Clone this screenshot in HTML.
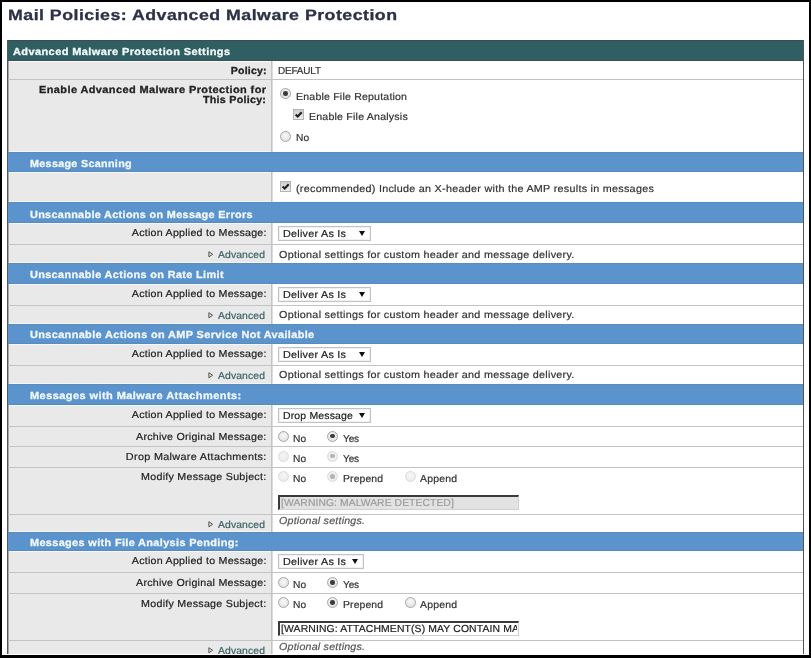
<!DOCTYPE html>
<html><head><meta charset="utf-8"><style>
html,body{margin:0;padding:0;}
body{width:811px;height:658px;position:relative;overflow:hidden;background:#fff;font-family:"Liberation Sans",sans-serif;text-rendering:geometricPrecision;}
#clip{position:absolute;left:0;top:0;width:811px;height:658px;overflow:hidden;filter:blur(0.35px);}
</style></head><body><div id="clip">
<div style="position:absolute;left:7px;top:40px;width:797px;height:21px;background:#2f5e63"></div>
<div style="position:absolute;left:7px;top:40px;width:797px;height:1px;background:#3f4b4e"></div>
<div style="position:absolute;left:7px;top:60px;width:797px;height:1px;background:#3f5053"></div>
<div style="position:absolute;left:8px;top:61px;width:263px;height:18px;background:#e9e9e9"></div>
<div style="position:absolute;left:272px;top:61px;width:531px;height:18px;background:#fff"></div>
<div style="position:absolute;left:271px;top:61px;width:1px;height:18px;background:#c4c4c4"></div>
<div style="position:absolute;left:272px;top:61px;width:1px;height:18px;background:#dcdcdc"></div>
<div style="position:absolute;left:8px;top:61px;width:1px;height:18px;background:#a8a8a8"></div>
<div style="position:absolute;left:9px;top:61px;width:262px;height:1px;background:#f7f7f7"></div>
<div style="position:absolute;left:8px;top:79px;width:263px;height:73px;background:#e9e9e9"></div>
<div style="position:absolute;left:272px;top:79px;width:531px;height:73px;background:#fff"></div>
<div style="position:absolute;left:271px;top:79px;width:1px;height:73px;background:#c4c4c4"></div>
<div style="position:absolute;left:272px;top:79px;width:1px;height:73px;background:#dcdcdc"></div>
<div style="position:absolute;left:8px;top:79px;width:1px;height:73px;background:#a8a8a8"></div>
<div style="position:absolute;left:9px;top:151px;width:262px;height:1px;background:#f5f5f5"></div>
<div style="position:absolute;left:8px;top:79px;width:795px;height:1px;background:#c3c3c3"></div>
<div style="position:absolute;left:8px;top:152px;width:795px;height:20px;background:#5b93cc"></div>
<div style="position:absolute;left:8px;top:152px;width:795px;height:1px;background:#5d8cba"></div>
<div style="position:absolute;left:8px;top:171px;width:795px;height:1px;background:#5a8bbd"></div>
<div style="position:absolute;left:8px;top:172px;width:263px;height:30px;background:#e9e9e9"></div>
<div style="position:absolute;left:272px;top:172px;width:531px;height:30px;background:#fff"></div>
<div style="position:absolute;left:271px;top:172px;width:1px;height:30px;background:#c4c4c4"></div>
<div style="position:absolute;left:272px;top:172px;width:1px;height:30px;background:#dcdcdc"></div>
<div style="position:absolute;left:8px;top:172px;width:1px;height:30px;background:#a8a8a8"></div>
<div style="position:absolute;left:9px;top:172px;width:262px;height:1px;background:#f7f7f7"></div>
<div style="position:absolute;left:9px;top:201px;width:262px;height:1px;background:#f5f5f5"></div>
<div style="position:absolute;left:8px;top:202px;width:795px;height:21px;background:#5b93cc"></div>
<div style="position:absolute;left:8px;top:202px;width:795px;height:1px;background:#5d8cba"></div>
<div style="position:absolute;left:8px;top:222px;width:795px;height:1px;background:#5a8bbd"></div>
<div style="position:absolute;left:8px;top:223px;width:263px;height:21px;background:#e9e9e9"></div>
<div style="position:absolute;left:272px;top:223px;width:531px;height:21px;background:#fff"></div>
<div style="position:absolute;left:271px;top:223px;width:1px;height:21px;background:#c4c4c4"></div>
<div style="position:absolute;left:272px;top:223px;width:1px;height:21px;background:#dcdcdc"></div>
<div style="position:absolute;left:8px;top:223px;width:1px;height:21px;background:#a8a8a8"></div>
<div style="position:absolute;left:9px;top:223px;width:262px;height:1px;background:#f7f7f7"></div>
<div style="position:absolute;left:8px;top:244px;width:263px;height:19px;background:#e9e9e9"></div>
<div style="position:absolute;left:272px;top:244px;width:531px;height:19px;background:#fff"></div>
<div style="position:absolute;left:271px;top:244px;width:1px;height:19px;background:#c4c4c4"></div>
<div style="position:absolute;left:272px;top:244px;width:1px;height:19px;background:#dcdcdc"></div>
<div style="position:absolute;left:8px;top:244px;width:1px;height:19px;background:#a8a8a8"></div>
<div style="position:absolute;left:9px;top:262px;width:262px;height:1px;background:#f5f5f5"></div>
<div style="position:absolute;left:8px;top:244px;width:795px;height:1px;background:#c3c3c3"></div>
<div style="position:absolute;left:8px;top:263px;width:795px;height:21px;background:#5b93cc"></div>
<div style="position:absolute;left:8px;top:263px;width:795px;height:1px;background:#5d8cba"></div>
<div style="position:absolute;left:8px;top:283px;width:795px;height:1px;background:#5a8bbd"></div>
<div style="position:absolute;left:8px;top:284px;width:263px;height:21px;background:#e9e9e9"></div>
<div style="position:absolute;left:272px;top:284px;width:531px;height:21px;background:#fff"></div>
<div style="position:absolute;left:271px;top:284px;width:1px;height:21px;background:#c4c4c4"></div>
<div style="position:absolute;left:272px;top:284px;width:1px;height:21px;background:#dcdcdc"></div>
<div style="position:absolute;left:8px;top:284px;width:1px;height:21px;background:#a8a8a8"></div>
<div style="position:absolute;left:9px;top:284px;width:262px;height:1px;background:#f7f7f7"></div>
<div style="position:absolute;left:8px;top:305px;width:263px;height:19px;background:#e9e9e9"></div>
<div style="position:absolute;left:272px;top:305px;width:531px;height:19px;background:#fff"></div>
<div style="position:absolute;left:271px;top:305px;width:1px;height:19px;background:#c4c4c4"></div>
<div style="position:absolute;left:272px;top:305px;width:1px;height:19px;background:#dcdcdc"></div>
<div style="position:absolute;left:8px;top:305px;width:1px;height:19px;background:#a8a8a8"></div>
<div style="position:absolute;left:9px;top:323px;width:262px;height:1px;background:#f5f5f5"></div>
<div style="position:absolute;left:8px;top:305px;width:795px;height:1px;background:#c3c3c3"></div>
<div style="position:absolute;left:8px;top:324px;width:795px;height:20px;background:#5b93cc"></div>
<div style="position:absolute;left:8px;top:324px;width:795px;height:1px;background:#5d8cba"></div>
<div style="position:absolute;left:8px;top:343px;width:795px;height:1px;background:#5a8bbd"></div>
<div style="position:absolute;left:8px;top:344px;width:263px;height:21px;background:#e9e9e9"></div>
<div style="position:absolute;left:272px;top:344px;width:531px;height:21px;background:#fff"></div>
<div style="position:absolute;left:271px;top:344px;width:1px;height:21px;background:#c4c4c4"></div>
<div style="position:absolute;left:272px;top:344px;width:1px;height:21px;background:#dcdcdc"></div>
<div style="position:absolute;left:8px;top:344px;width:1px;height:21px;background:#a8a8a8"></div>
<div style="position:absolute;left:9px;top:344px;width:262px;height:1px;background:#f7f7f7"></div>
<div style="position:absolute;left:8px;top:365px;width:263px;height:19px;background:#e9e9e9"></div>
<div style="position:absolute;left:272px;top:365px;width:531px;height:19px;background:#fff"></div>
<div style="position:absolute;left:271px;top:365px;width:1px;height:19px;background:#c4c4c4"></div>
<div style="position:absolute;left:272px;top:365px;width:1px;height:19px;background:#dcdcdc"></div>
<div style="position:absolute;left:8px;top:365px;width:1px;height:19px;background:#a8a8a8"></div>
<div style="position:absolute;left:9px;top:383px;width:262px;height:1px;background:#f5f5f5"></div>
<div style="position:absolute;left:8px;top:365px;width:795px;height:1px;background:#c3c3c3"></div>
<div style="position:absolute;left:8px;top:384px;width:795px;height:21px;background:#5b93cc"></div>
<div style="position:absolute;left:8px;top:384px;width:795px;height:1px;background:#5d8cba"></div>
<div style="position:absolute;left:8px;top:404px;width:795px;height:1px;background:#5a8bbd"></div>
<div style="position:absolute;left:8px;top:405px;width:263px;height:21px;background:#e9e9e9"></div>
<div style="position:absolute;left:272px;top:405px;width:531px;height:21px;background:#fff"></div>
<div style="position:absolute;left:271px;top:405px;width:1px;height:21px;background:#c4c4c4"></div>
<div style="position:absolute;left:272px;top:405px;width:1px;height:21px;background:#dcdcdc"></div>
<div style="position:absolute;left:8px;top:405px;width:1px;height:21px;background:#a8a8a8"></div>
<div style="position:absolute;left:9px;top:405px;width:262px;height:1px;background:#f7f7f7"></div>
<div style="position:absolute;left:8px;top:426px;width:263px;height:20px;background:#e9e9e9"></div>
<div style="position:absolute;left:272px;top:426px;width:531px;height:20px;background:#fff"></div>
<div style="position:absolute;left:271px;top:426px;width:1px;height:20px;background:#c4c4c4"></div>
<div style="position:absolute;left:272px;top:426px;width:1px;height:20px;background:#dcdcdc"></div>
<div style="position:absolute;left:8px;top:426px;width:1px;height:20px;background:#a8a8a8"></div>
<div style="position:absolute;left:8px;top:426px;width:795px;height:1px;background:#c3c3c3"></div>
<div style="position:absolute;left:8px;top:446px;width:263px;height:21px;background:#e9e9e9"></div>
<div style="position:absolute;left:272px;top:446px;width:531px;height:21px;background:#fff"></div>
<div style="position:absolute;left:271px;top:446px;width:1px;height:21px;background:#c4c4c4"></div>
<div style="position:absolute;left:272px;top:446px;width:1px;height:21px;background:#dcdcdc"></div>
<div style="position:absolute;left:8px;top:446px;width:1px;height:21px;background:#a8a8a8"></div>
<div style="position:absolute;left:8px;top:446px;width:795px;height:1px;background:#c3c3c3"></div>
<div style="position:absolute;left:8px;top:467px;width:263px;height:47px;background:#e9e9e9"></div>
<div style="position:absolute;left:272px;top:467px;width:531px;height:47px;background:#fff"></div>
<div style="position:absolute;left:271px;top:467px;width:1px;height:47px;background:#c4c4c4"></div>
<div style="position:absolute;left:272px;top:467px;width:1px;height:47px;background:#dcdcdc"></div>
<div style="position:absolute;left:8px;top:467px;width:1px;height:47px;background:#a8a8a8"></div>
<div style="position:absolute;left:8px;top:467px;width:795px;height:1px;background:#c3c3c3"></div>
<div style="position:absolute;left:8px;top:514px;width:263px;height:18px;background:#e9e9e9"></div>
<div style="position:absolute;left:272px;top:514px;width:531px;height:18px;background:#fff"></div>
<div style="position:absolute;left:271px;top:514px;width:1px;height:18px;background:#c4c4c4"></div>
<div style="position:absolute;left:272px;top:514px;width:1px;height:18px;background:#dcdcdc"></div>
<div style="position:absolute;left:8px;top:514px;width:1px;height:18px;background:#a8a8a8"></div>
<div style="position:absolute;left:9px;top:531px;width:262px;height:1px;background:#f5f5f5"></div>
<div style="position:absolute;left:8px;top:514px;width:795px;height:1px;background:#c3c3c3"></div>
<div style="position:absolute;left:8px;top:532px;width:795px;height:19px;background:#5b93cc"></div>
<div style="position:absolute;left:8px;top:532px;width:795px;height:1px;background:#5d8cba"></div>
<div style="position:absolute;left:8px;top:550px;width:795px;height:1px;background:#5a8bbd"></div>
<div style="position:absolute;left:8px;top:551px;width:263px;height:21px;background:#e9e9e9"></div>
<div style="position:absolute;left:272px;top:551px;width:531px;height:21px;background:#fff"></div>
<div style="position:absolute;left:271px;top:551px;width:1px;height:21px;background:#c4c4c4"></div>
<div style="position:absolute;left:272px;top:551px;width:1px;height:21px;background:#dcdcdc"></div>
<div style="position:absolute;left:8px;top:551px;width:1px;height:21px;background:#a8a8a8"></div>
<div style="position:absolute;left:9px;top:551px;width:262px;height:1px;background:#f7f7f7"></div>
<div style="position:absolute;left:8px;top:572px;width:263px;height:21px;background:#e9e9e9"></div>
<div style="position:absolute;left:272px;top:572px;width:531px;height:21px;background:#fff"></div>
<div style="position:absolute;left:271px;top:572px;width:1px;height:21px;background:#c4c4c4"></div>
<div style="position:absolute;left:272px;top:572px;width:1px;height:21px;background:#dcdcdc"></div>
<div style="position:absolute;left:8px;top:572px;width:1px;height:21px;background:#a8a8a8"></div>
<div style="position:absolute;left:8px;top:572px;width:795px;height:1px;background:#c3c3c3"></div>
<div style="position:absolute;left:8px;top:593px;width:263px;height:47px;background:#e9e9e9"></div>
<div style="position:absolute;left:272px;top:593px;width:531px;height:47px;background:#fff"></div>
<div style="position:absolute;left:271px;top:593px;width:1px;height:47px;background:#c4c4c4"></div>
<div style="position:absolute;left:272px;top:593px;width:1px;height:47px;background:#dcdcdc"></div>
<div style="position:absolute;left:8px;top:593px;width:1px;height:47px;background:#a8a8a8"></div>
<div style="position:absolute;left:8px;top:593px;width:795px;height:1px;background:#c3c3c3"></div>
<div style="position:absolute;left:8px;top:640px;width:263px;height:20px;background:#e9e9e9"></div>
<div style="position:absolute;left:272px;top:640px;width:531px;height:20px;background:#fff"></div>
<div style="position:absolute;left:271px;top:640px;width:1px;height:20px;background:#c4c4c4"></div>
<div style="position:absolute;left:272px;top:640px;width:1px;height:20px;background:#dcdcdc"></div>
<div style="position:absolute;left:8px;top:640px;width:1px;height:20px;background:#a8a8a8"></div>
<div style="position:absolute;left:8px;top:640px;width:795px;height:1px;background:#c3c3c3"></div>
<div style="position:absolute;left:7px;top:40px;width:1px;height:620px;background:#555"></div>
<div style="position:absolute;left:803px;top:40px;width:1px;height:620px;background:#555"></div>
<div style="position:absolute;left:280px;top:88px;width:9px;height:9px;border:1px solid #a6a6a6;border-radius:50%;background:radial-gradient(circle at 50% 40%,#f8f8f8 0,#e8e8e8 60%,#dadada 100%)"></div>
<div style="position:absolute;left:283.2px;top:91.2px;width:4.5px;height:4.5px;border-radius:50%;background:#3c3c3c"></div>
<div style="position:absolute;left:293px;top:109px;width:9px;height:9px;border:1px solid #b4b4b4;background:linear-gradient(#cfcfcf,#ececec)"></div>
<svg style="position:absolute;left:293px;top:109px" width="11" height="11" viewBox="0 0 11 11"><path d="M2.6 5.4 L4.7 7.4 L8.7 3.3" fill="none" stroke="#1e1e1e" stroke-width="2.1"/></svg>
<div style="position:absolute;left:280px;top:131px;width:9px;height:9px;border:1px solid #a6a6a6;border-radius:50%;background:radial-gradient(circle at 50% 40%,#f8f8f8 0,#e8e8e8 60%,#dadada 100%)"></div>
<div style="position:absolute;left:280px;top:181px;width:9px;height:9px;border:1px solid #b4b4b4;background:linear-gradient(#cfcfcf,#ececec)"></div>
<svg style="position:absolute;left:280px;top:181px" width="11" height="11" viewBox="0 0 11 11"><path d="M2.6 5.4 L4.7 7.4 L8.7 3.3" fill="none" stroke="#1e1e1e" stroke-width="2.1"/></svg>
<div style="position:absolute;left:278px;top:226px;width:91px;height:13px;border:1px solid #c2c2c2;background:#fff;box-shadow:inset 0 0 0 1px #f0f0f0"></div>
<svg style="position:absolute;left:359px;top:231px" width="6" height="5" viewBox="0 0 6 5"><path d="M0 0 H6 L3 5 Z" fill="#111"/></svg>
<svg style="position:absolute;left:208px;top:251.10000000000002px" width="6" height="7" viewBox="0 0 6 7"><path d="M0.9 0.7 L4.6 3.25 L0.9 5.8 Z" fill="none" stroke="#505050" stroke-width="1"/></svg>
<div style="position:absolute;left:278px;top:287px;width:91px;height:13px;border:1px solid #c2c2c2;background:#fff;box-shadow:inset 0 0 0 1px #f0f0f0"></div>
<svg style="position:absolute;left:359px;top:292px" width="6" height="5" viewBox="0 0 6 5"><path d="M0 0 H6 L3 5 Z" fill="#111"/></svg>
<svg style="position:absolute;left:208px;top:312.1px" width="6" height="7" viewBox="0 0 6 7"><path d="M0.9 0.7 L4.6 3.25 L0.9 5.8 Z" fill="none" stroke="#505050" stroke-width="1"/></svg>
<div style="position:absolute;left:278px;top:347px;width:91px;height:13px;border:1px solid #c2c2c2;background:#fff;box-shadow:inset 0 0 0 1px #f0f0f0"></div>
<svg style="position:absolute;left:359px;top:352px" width="6" height="5" viewBox="0 0 6 5"><path d="M0 0 H6 L3 5 Z" fill="#111"/></svg>
<svg style="position:absolute;left:208px;top:372.1px" width="6" height="7" viewBox="0 0 6 7"><path d="M0.9 0.7 L4.6 3.25 L0.9 5.8 Z" fill="none" stroke="#505050" stroke-width="1"/></svg>
<div style="position:absolute;left:278px;top:408px;width:91px;height:13px;border:1px solid #c2c2c2;background:#fff;box-shadow:inset 0 0 0 1px #f0f0f0"></div>
<svg style="position:absolute;left:359px;top:413px" width="6" height="5" viewBox="0 0 6 5"><path d="M0 0 H6 L3 5 Z" fill="#111"/></svg>
<div style="position:absolute;left:278px;top:430.5px;width:9px;height:9px;border:1px solid #a6a6a6;border-radius:50%;background:radial-gradient(circle at 50% 40%,#f8f8f8 0,#e8e8e8 60%,#dadada 100%)"></div>
<div style="position:absolute;left:327px;top:430.5px;width:9px;height:9px;border:1px solid #a6a6a6;border-radius:50%;background:radial-gradient(circle at 50% 40%,#f8f8f8 0,#e8e8e8 60%,#dadada 100%)"></div>
<div style="position:absolute;left:330.2px;top:433.7px;width:4.5px;height:4.5px;border-radius:50%;background:#3c3c3c"></div>
<div style="position:absolute;left:278px;top:450.5px;width:9px;height:9px;border:1px solid #dcdcdc;border-radius:50%;background:radial-gradient(circle at 50% 40%,#f6f6f6 0,#ececec 70%,#e4e4e4 100%)"></div>
<div style="position:absolute;left:327px;top:450.5px;width:9px;height:9px;border:1px solid #dcdcdc;border-radius:50%;background:radial-gradient(circle at 50% 40%,#f6f6f6 0,#ececec 70%,#e4e4e4 100%)"></div>
<div style="position:absolute;left:330.2px;top:453.7px;width:4.5px;height:4.5px;border-radius:50%;background:#b4b4b4"></div>
<div style="position:absolute;left:278px;top:471px;width:9px;height:9px;border:1px solid #dcdcdc;border-radius:50%;background:radial-gradient(circle at 50% 40%,#f6f6f6 0,#ececec 70%,#e4e4e4 100%)"></div>
<div style="position:absolute;left:327px;top:471px;width:9px;height:9px;border:1px solid #dcdcdc;border-radius:50%;background:radial-gradient(circle at 50% 40%,#f6f6f6 0,#ececec 70%,#e4e4e4 100%)"></div>
<div style="position:absolute;left:330.2px;top:474.2px;width:4.5px;height:4.5px;border-radius:50%;background:#b4b4b4"></div>
<div style="position:absolute;left:404.5px;top:471px;width:9px;height:9px;border:1px solid #dcdcdc;border-radius:50%;background:radial-gradient(circle at 50% 40%,#f6f6f6 0,#ececec 70%,#e4e4e4 100%)"></div>
<div style="position:absolute;left:278px;top:495px;width:239px;height:13px;border-top:2px solid #3a3a3a;border-left:2px solid #3a3a3a;border-right:1px solid #d0d0d0;border-bottom:1px solid #d0d0d0;background:#e2e2e2;box-sizing:content-box;width:238px;height:12px"></div>
<svg style="position:absolute;left:208px;top:521.1px" width="6" height="7" viewBox="0 0 6 7"><path d="M0.9 0.7 L4.6 3.25 L0.9 5.8 Z" fill="none" stroke="#505050" stroke-width="1"/></svg>
<div style="position:absolute;left:278px;top:554px;width:84px;height:13px;border:1px solid #c2c2c2;background:#fff;box-shadow:inset 0 0 0 1px #f0f0f0"></div>
<svg style="position:absolute;left:352px;top:559px" width="6" height="5" viewBox="0 0 6 5"><path d="M0 0 H6 L3 5 Z" fill="#111"/></svg>
<div style="position:absolute;left:278px;top:577px;width:9px;height:9px;border:1px solid #a6a6a6;border-radius:50%;background:radial-gradient(circle at 50% 40%,#f8f8f8 0,#e8e8e8 60%,#dadada 100%)"></div>
<div style="position:absolute;left:327px;top:577px;width:9px;height:9px;border:1px solid #a6a6a6;border-radius:50%;background:radial-gradient(circle at 50% 40%,#f8f8f8 0,#e8e8e8 60%,#dadada 100%)"></div>
<div style="position:absolute;left:330.2px;top:580.2px;width:4.5px;height:4.5px;border-radius:50%;background:#3c3c3c"></div>
<div style="position:absolute;left:278px;top:597px;width:9px;height:9px;border:1px solid #a6a6a6;border-radius:50%;background:radial-gradient(circle at 50% 40%,#f8f8f8 0,#e8e8e8 60%,#dadada 100%)"></div>
<div style="position:absolute;left:327px;top:597px;width:9px;height:9px;border:1px solid #a6a6a6;border-radius:50%;background:radial-gradient(circle at 50% 40%,#f8f8f8 0,#e8e8e8 60%,#dadada 100%)"></div>
<div style="position:absolute;left:330.2px;top:600.2px;width:4.5px;height:4.5px;border-radius:50%;background:#3c3c3c"></div>
<div style="position:absolute;left:404.5px;top:597px;width:9px;height:9px;border:1px solid #a6a6a6;border-radius:50%;background:radial-gradient(circle at 50% 40%,#f8f8f8 0,#e8e8e8 60%,#dadada 100%)"></div>
<div style="position:absolute;left:278px;top:621px;width:238px;height:12px;border-top:2px solid #3a3a3a;border-left:2px solid #3a3a3a;border-right:1px solid #d0d0d0;border-bottom:1px solid #d0d0d0;background:#fff;overflow:hidden"></div>
<svg style="position:absolute;left:208px;top:647.1px" width="6" height="7" viewBox="0 0 6 7"><path d="M0.9 0.7 L4.6 3.25 L0.9 5.8 Z" fill="none" stroke="#505050" stroke-width="1"/></svg>
<div id="t0" style="position:absolute;white-space:nowrap;font-size:15px;line-height:15px;color:#2b3146;font-weight:bold;-webkit-text-stroke:0.3px #2b3146;letter-spacing:0.396px;top:8.00px;transform:scaleX(1.1850);left:8px;transform-origin:0 0;">Mail Policies: Advanced Malware Protection</div>
<div id="t1" style="position:absolute;white-space:nowrap;font-size:10.2px;line-height:10.2px;color:#f4fbfb;font-weight:bold;-webkit-text-stroke:0.3px #f4fbfb;letter-spacing:0.385px;top:48.00px;transform:scaleX(1.0773);left:12.5px;transform-origin:0 0;">Advanced Malware Protection Settings</div>
<div id="t2" style="position:absolute;white-space:nowrap;font-size:10.2px;line-height:10.2px;color:#f2f8fc;font-weight:bold;-webkit-text-stroke:0.3px #f2f8fc;letter-spacing:0.313px;top:160.00px;transform:scaleX(1.0539);left:30.4px;transform-origin:0 0;">Message Scanning</div>
<div id="t3" style="position:absolute;white-space:nowrap;font-size:10.2px;line-height:10.2px;color:#f2f8fc;font-weight:bold;-webkit-text-stroke:0.3px #f2f8fc;letter-spacing:0.323px;top:211.00px;transform:scaleX(1.0625);left:30.4px;transform-origin:0 0;">Unscannable Actions on Message Errors</div>
<div id="t4" style="position:absolute;white-space:nowrap;font-size:10.2px;line-height:10.2px;color:#f2f8fc;font-weight:bold;-webkit-text-stroke:0.3px #f2f8fc;letter-spacing:0.336px;top:271.00px;transform:scaleX(1.0672);left:30.4px;transform-origin:0 0;">Unscannable Actions on Rate Limit</div>
<div id="t5" style="position:absolute;white-space:nowrap;font-size:10.2px;line-height:10.2px;color:#f2f8fc;font-weight:bold;-webkit-text-stroke:0.3px #f2f8fc;letter-spacing:0.349px;top:331.00px;transform:scaleX(1.0704);left:30.4px;transform-origin:0 0;">Unscannable Actions on AMP Service Not Available</div>
<div id="t6" style="position:absolute;white-space:nowrap;font-size:10.2px;line-height:10.2px;color:#f2f8fc;font-weight:bold;-webkit-text-stroke:0.3px #f2f8fc;letter-spacing:0.403px;top:392.00px;transform:scaleX(1.0787);left:30.4px;transform-origin:0 0;">Messages with Malware Attachments:</div>
<div id="t7" style="position:absolute;white-space:nowrap;font-size:10.2px;line-height:10.2px;color:#f2f8fc;font-weight:bold;-webkit-text-stroke:0.3px #f2f8fc;letter-spacing:0.337px;top:539.00px;transform:scaleX(1.0690);left:30.4px;transform-origin:0 0;">Messages with File Analysis Pending:</div>
<div id="t8" style="position:absolute;white-space:nowrap;font-size:10.2px;line-height:10.2px;color:#222;font-weight:bold;-webkit-text-stroke:0.3px #222;letter-spacing:0.185px;top:67.00px;transform:scaleX(1.0343);right:544.81px;transform-origin:100% 0;">Policy:</div>
<div id="t9" style="position:absolute;white-space:nowrap;font-size:10.2px;line-height:10.2px;color:#333;-webkit-text-stroke:0.2px #333;letter-spacing:-0.180px;top:67.00px;transform:scaleX(0.9766);left:278.4px;transform-origin:0 0;">DEFAULT</div>
<div id="t10" style="position:absolute;white-space:nowrap;font-size:10.2px;line-height:10.2px;color:#222;font-weight:bold;-webkit-text-stroke:0.3px #222;letter-spacing:0.374px;top:86.00px;transform:scaleX(1.0755);right:544.60px;transform-origin:100% 0;">Enable Advanced Malware Protection for</div>
<div id="t11" style="position:absolute;white-space:nowrap;font-size:10.2px;line-height:10.2px;color:#222;font-weight:bold;-webkit-text-stroke:0.3px #222;letter-spacing:0.251px;top:96.00px;transform:scaleX(1.0508);right:544.74px;transform-origin:100% 0;">This Policy:</div>
<div id="t12" style="position:absolute;white-space:nowrap;font-size:10.2px;line-height:10.2px;color:#333;-webkit-text-stroke:0.2px #333;letter-spacing:0.182px;top:93.00px;transform:scaleX(1.0384);left:295.5px;transform-origin:0 0;">Enable File Reputation</div>
<div id="t13" style="position:absolute;white-space:nowrap;font-size:10.2px;line-height:10.2px;color:#333;-webkit-text-stroke:0.2px #333;letter-spacing:0.190px;top:113.00px;transform:scaleX(1.0413);left:308.7px;transform-origin:0 0;">Enable File Analysis</div>
<div id="t14" style="position:absolute;white-space:nowrap;font-size:10.2px;line-height:10.2px;color:#333;-webkit-text-stroke:0.2px #333;letter-spacing:0.034px;top:134.00px;transform:scaleX(1.0026);left:295.5px;transform-origin:0 0;">No</div>
<div id="t15" style="position:absolute;white-space:nowrap;font-size:10.2px;line-height:10.2px;color:#333;-webkit-text-stroke:0.2px #333;letter-spacing:0.265px;top:185.00px;transform:scaleX(1.0565);left:295.8px;transform-origin:0 0;">(recommended) Include an X-header with the AMP results in messages</div>
<div id="t16" style="position:absolute;white-space:nowrap;font-size:10.2px;line-height:10.2px;color:#222;-webkit-text-stroke:0.2px #222;letter-spacing:0.225px;top:229.00px;transform:scaleX(1.0480);right:544.76px;transform-origin:100% 0;">Action Applied to Message:</div>
<div id="t17" style="position:absolute;white-space:nowrap;font-size:10.2px;line-height:10.2px;color:#222;-webkit-text-stroke:0.2px #222;letter-spacing:0.251px;top:230.00px;transform:scaleX(1.0563);left:283px;transform-origin:0 0;">Deliver As Is</div>
<div id="t18" style="position:absolute;white-space:nowrap;font-size:10.2px;line-height:10.2px;color:#3b6366;-webkit-text-stroke:0.2px #3b6366;letter-spacing:0.111px;top:251.00px;transform:scaleX(1.0175);left:218.2px;transform-origin:0 0;">Advanced</div>
<div id="t19" style="position:absolute;white-space:nowrap;font-size:10.2px;line-height:10.2px;color:#333;-webkit-text-stroke:0.2px #333;letter-spacing:0.257px;top:251.00px;transform:scaleX(1.0575);left:278.7px;transform-origin:0 0;">Optional settings for custom header and message delivery.</div>
<div id="t20" style="position:absolute;white-space:nowrap;font-size:10.2px;line-height:10.2px;color:#222;-webkit-text-stroke:0.2px #222;letter-spacing:0.225px;top:290.00px;transform:scaleX(1.0480);right:544.76px;transform-origin:100% 0;">Action Applied to Message:</div>
<div id="t21" style="position:absolute;white-space:nowrap;font-size:10.2px;line-height:10.2px;color:#222;-webkit-text-stroke:0.2px #222;letter-spacing:0.251px;top:291.00px;transform:scaleX(1.0563);left:283px;transform-origin:0 0;">Deliver As Is</div>
<div id="t22" style="position:absolute;white-space:nowrap;font-size:10.2px;line-height:10.2px;color:#3b6366;-webkit-text-stroke:0.2px #3b6366;letter-spacing:0.111px;top:312.00px;transform:scaleX(1.0175);left:218.2px;transform-origin:0 0;">Advanced</div>
<div id="t23" style="position:absolute;white-space:nowrap;font-size:10.2px;line-height:10.2px;color:#333;-webkit-text-stroke:0.2px #333;letter-spacing:0.257px;top:311.00px;transform:scaleX(1.0575);left:278.7px;transform-origin:0 0;">Optional settings for custom header and message delivery.</div>
<div id="t24" style="position:absolute;white-space:nowrap;font-size:10.2px;line-height:10.2px;color:#222;-webkit-text-stroke:0.2px #222;letter-spacing:0.225px;top:350.00px;transform:scaleX(1.0480);right:544.76px;transform-origin:100% 0;">Action Applied to Message:</div>
<div id="t25" style="position:absolute;white-space:nowrap;font-size:10.2px;line-height:10.2px;color:#222;-webkit-text-stroke:0.2px #222;letter-spacing:0.251px;top:351.00px;transform:scaleX(1.0563);left:283px;transform-origin:0 0;">Deliver As Is</div>
<div id="t26" style="position:absolute;white-space:nowrap;font-size:10.2px;line-height:10.2px;color:#3b6366;-webkit-text-stroke:0.2px #3b6366;letter-spacing:0.111px;top:372.00px;transform:scaleX(1.0175);left:218.2px;transform-origin:0 0;">Advanced</div>
<div id="t27" style="position:absolute;white-space:nowrap;font-size:10.2px;line-height:10.2px;color:#333;-webkit-text-stroke:0.2px #333;letter-spacing:0.257px;top:371.00px;transform:scaleX(1.0575);left:278.7px;transform-origin:0 0;">Optional settings for custom header and message delivery.</div>
<div id="t28" style="position:absolute;white-space:nowrap;font-size:10.2px;line-height:10.2px;color:#222;-webkit-text-stroke:0.2px #222;letter-spacing:0.225px;top:411.00px;transform:scaleX(1.0480);right:544.76px;transform-origin:100% 0;">Action Applied to Message:</div>
<div id="t29" style="position:absolute;white-space:nowrap;font-size:10.2px;line-height:10.2px;color:#222;-webkit-text-stroke:0.2px #222;letter-spacing:0.157px;top:412.00px;transform:scaleX(1.0268);left:283px;transform-origin:0 0;">Drop Message</div>
<div id="t30" style="position:absolute;white-space:nowrap;font-size:10.2px;line-height:10.2px;color:#222;-webkit-text-stroke:0.2px #222;letter-spacing:0.227px;top:433.00px;transform:scaleX(1.0479);right:544.76px;transform-origin:100% 0;">Archive Original Message:</div>
<div id="t31" style="position:absolute;white-space:nowrap;font-size:10.2px;line-height:10.2px;color:#333;-webkit-text-stroke:0.2px #333;letter-spacing:0.034px;top:435.00px;transform:scaleX(1.0026);left:293.4px;transform-origin:0 0;">No</div>
<div id="t32" style="position:absolute;white-space:nowrap;font-size:10.2px;line-height:10.2px;color:#333;-webkit-text-stroke:0.2px #333;letter-spacing:-0.133px;top:435.00px;transform:scaleX(0.9842);left:343.2px;transform-origin:0 0;">Yes</div>
<div id="t33" style="position:absolute;white-space:nowrap;font-size:10.2px;line-height:10.2px;color:#222;-webkit-text-stroke:0.2px #222;letter-spacing:0.301px;top:453.00px;transform:scaleX(1.0614);right:544.68px;transform-origin:100% 0;">Drop Malware Attachments:</div>
<div id="t34" style="position:absolute;white-space:nowrap;font-size:10.2px;line-height:10.2px;color:#333;-webkit-text-stroke:0.2px #333;letter-spacing:0.034px;top:455.00px;transform:scaleX(1.0026);left:293.4px;transform-origin:0 0;">No</div>
<div id="t35" style="position:absolute;white-space:nowrap;font-size:10.2px;line-height:10.2px;color:#333;-webkit-text-stroke:0.2px #333;letter-spacing:-0.133px;top:455.00px;transform:scaleX(0.9842);left:343.2px;transform-origin:0 0;">Yes</div>
<div id="t36" style="position:absolute;white-space:nowrap;font-size:10.2px;line-height:10.2px;color:#222;-webkit-text-stroke:0.2px #222;letter-spacing:0.244px;top:473.00px;transform:scaleX(1.0495);right:544.74px;transform-origin:100% 0;">Modify Message Subject:</div>
<div id="t37" style="position:absolute;white-space:nowrap;font-size:10.2px;line-height:10.2px;color:#333;-webkit-text-stroke:0.2px #333;letter-spacing:0.034px;top:475.00px;transform:scaleX(1.0026);left:293.4px;transform-origin:0 0;">No</div>
<div id="t38" style="position:absolute;white-space:nowrap;font-size:10.2px;line-height:10.2px;color:#333;-webkit-text-stroke:0.2px #333;letter-spacing:0.120px;top:475.00px;transform:scaleX(1.0191);left:343.2px;transform-origin:0 0;">Prepend</div>
<div id="t39" style="position:absolute;white-space:nowrap;font-size:10.2px;line-height:10.2px;color:#333;-webkit-text-stroke:0.2px #333;letter-spacing:0.183px;top:475.00px;transform:scaleX(1.0267);left:420.4px;transform-origin:0 0;">Append</div>
<div id="t40" style="position:absolute;white-space:nowrap;font-size:10.2px;line-height:10.2px;color:#9c9c9c;-webkit-text-stroke:0.2px #9c9c9c;letter-spacing:0.085px;top:499.00px;transform:scaleX(1.0134);left:281.2px;transform-origin:0 0;">[WARNING: MALWARE DETECTED]</div>
<div id="t41" style="position:absolute;white-space:nowrap;font-size:10.2px;line-height:10.2px;color:#3b6366;-webkit-text-stroke:0.2px #3b6366;letter-spacing:0.111px;top:521.00px;transform:scaleX(1.0175);left:218.2px;transform-origin:0 0;">Advanced</div>
<div id="t42" style="position:absolute;white-space:nowrap;font-size:10.2px;line-height:10.2px;color:#555;font-style:italic;-webkit-text-stroke:0.2px #555;letter-spacing:0.205px;top:517.00px;transform:scaleX(1.0462);left:279px;transform-origin:0 0;">Optional settings.</div>
<div id="t43" style="position:absolute;white-space:nowrap;font-size:10.2px;line-height:10.2px;color:#222;-webkit-text-stroke:0.2px #222;letter-spacing:0.225px;top:557.00px;transform:scaleX(1.0480);right:544.76px;transform-origin:100% 0;">Action Applied to Message:</div>
<div id="t44" style="position:absolute;white-space:nowrap;font-size:10.2px;line-height:10.2px;color:#222;-webkit-text-stroke:0.2px #222;letter-spacing:0.251px;top:558.00px;transform:scaleX(1.0563);left:283px;transform-origin:0 0;">Deliver As Is</div>
<div id="t45" style="position:absolute;white-space:nowrap;font-size:10.2px;line-height:10.2px;color:#222;-webkit-text-stroke:0.2px #222;letter-spacing:0.227px;top:579.00px;transform:scaleX(1.0479);right:544.76px;transform-origin:100% 0;">Archive Original Message:</div>
<div id="t46" style="position:absolute;white-space:nowrap;font-size:10.2px;line-height:10.2px;color:#333;-webkit-text-stroke:0.2px #333;letter-spacing:0.034px;top:581.00px;transform:scaleX(1.0026);left:293.4px;transform-origin:0 0;">No</div>
<div id="t47" style="position:absolute;white-space:nowrap;font-size:10.2px;line-height:10.2px;color:#333;-webkit-text-stroke:0.2px #333;letter-spacing:-0.133px;top:581.00px;transform:scaleX(0.9842);left:343.2px;transform-origin:0 0;">Yes</div>
<div id="t48" style="position:absolute;white-space:nowrap;font-size:10.2px;line-height:10.2px;color:#222;-webkit-text-stroke:0.2px #222;letter-spacing:0.244px;top:600.00px;transform:scaleX(1.0495);right:544.74px;transform-origin:100% 0;">Modify Message Subject:</div>
<div id="t49" style="position:absolute;white-space:nowrap;font-size:10.2px;line-height:10.2px;color:#333;-webkit-text-stroke:0.2px #333;letter-spacing:0.034px;top:601.00px;transform:scaleX(1.0026);left:293.4px;transform-origin:0 0;">No</div>
<div id="t50" style="position:absolute;white-space:nowrap;font-size:10.2px;line-height:10.2px;color:#333;-webkit-text-stroke:0.2px #333;letter-spacing:0.120px;top:601.00px;transform:scaleX(1.0191);left:343.2px;transform-origin:0 0;">Prepend</div>
<div id="t51" style="position:absolute;white-space:nowrap;font-size:10.2px;line-height:10.2px;color:#333;-webkit-text-stroke:0.2px #333;letter-spacing:0.183px;top:601.00px;transform:scaleX(1.0267);left:420.4px;transform-origin:0 0;">Append</div>
<div style="position:absolute;left:280px;top:623px;width:237px;height:12px;overflow:hidden"><div style="position:absolute;left:-280px;top:-623px;width:811px;height:658px"><div id="t52" style="position:absolute;white-space:nowrap;font-size:10.2px;line-height:10.2px;color:#222;-webkit-text-stroke:0.2px #222;letter-spacing:0.125px;top:625.00px;transform:scaleX(1.0207);left:281.2px;transform-origin:0 0;">[WARNING: ATTACHMENT(S) MAY CONTAIN MALWARE]</div></div></div>
<div id="t53" style="position:absolute;white-space:nowrap;font-size:10.2px;line-height:10.2px;color:#3b6366;-webkit-text-stroke:0.2px #3b6366;letter-spacing:0.111px;top:647.00px;transform:scaleX(1.0175);left:218.2px;transform-origin:0 0;">Advanced</div>
<div id="t54" style="position:absolute;white-space:nowrap;font-size:10.2px;line-height:10.2px;color:#555;font-style:italic;-webkit-text-stroke:0.2px #555;letter-spacing:0.205px;top:643.00px;transform:scaleX(1.0462);left:279px;transform-origin:0 0;">Optional settings.</div>
<div style="position:absolute;left:0;top:0;width:811px;height:2px;background:#000"></div>
<div style="position:absolute;left:0;top:0;width:2px;height:658px;background:#000"></div>
<div style="position:absolute;left:809px;top:0;width:2px;height:658px;background:#000"></div>
<div style="position:absolute;left:2px;top:654px;width:807px;height:1px;background:#fff"></div>
<div style="position:absolute;left:0;top:655px;width:811px;height:3px;background:#000"></div>
</div></body></html>
